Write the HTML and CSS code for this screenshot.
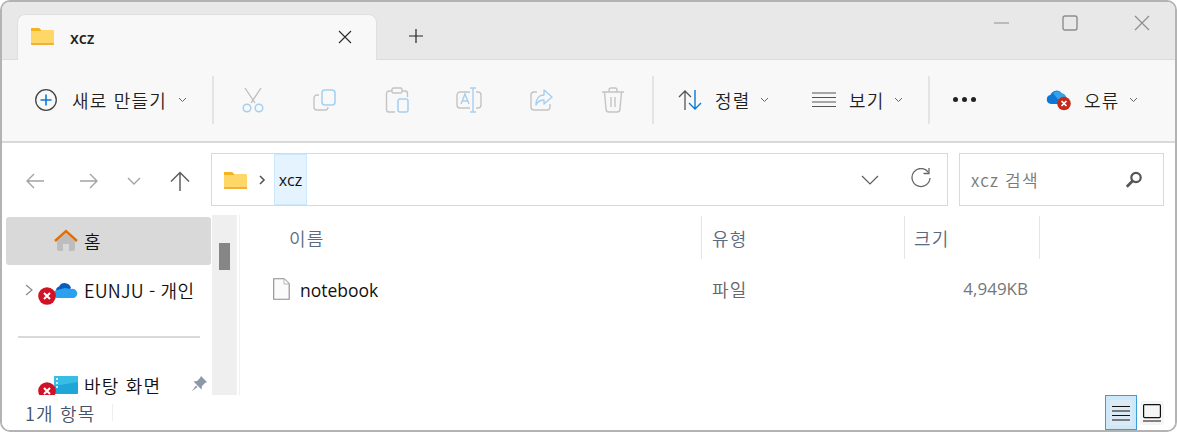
FILE: index.html
```html
<!DOCTYPE html>
<html lang="ko">
<head>
    <meta charset="UTF-8">
    <title>xcz</title>
    <link rel="stylesheet" href="styles.css">
</head>
<body>
    <div class="window">
        <!-- Title bar -->
        <div class="titlebar">
            <div class="tab">
                <svg class="tab-folder" width="23" height="18" viewBox="0 0 23 18"><path d="M0 1h8l2 2h12a1 1 0 0 1 1 1v13a1 1 0 0 1-1 1H1a1 1 0 0 1-1-1z" fill="#ffd768"/><path d="M0 1h8l2 2v1H0z" fill="#f5b31f"/><path d="M0 16h23v1a1 1 0 0 1-1 1H1a1 1 0 0 1-1-1z" fill="#f0b03a"/></svg>
                <span class="tab-title">xcz</span>
                <svg class="tab-close" width="14" height="14" viewBox="0 0 14 14"><path d="M1 1l12 12M13 1L1 13" stroke="#2b2b2b" stroke-width="1.1" fill="none"/></svg>
            </div>
            <svg class="tab-plus" width="16" height="16" viewBox="0 0 16 16"><path d="M8 1v14M1 8h14" stroke="#222" stroke-width="1.2" fill="none"/></svg>
            <div class="win-controls">
                <svg class="win-min" width="16" height="16" viewBox="0 0 16 16"><path d="M0 8h15" stroke="#8d8d8d" stroke-width="1.2"/></svg>
                <svg width="16" height="16" viewBox="0 0 16 16"><rect x="1" y="1" width="14" height="14" rx="2" stroke="#8d8d8d" stroke-width="1.4" fill="none"/></svg>
                <svg class="win-close" width="16" height="16" viewBox="0 0 16 16"><path d="M1 1l14 14M15 1L1 15" stroke="#8d8d8d" stroke-width="1.2" fill="none"/></svg>
            </div>
        </div>

        <!-- Toolbar -->
        <div class="toolbar">
            <div class="tool tool-new">
                <svg width="24" height="24" viewBox="0 0 24 24"><circle cx="12" cy="12" r="10.3" stroke="#444" stroke-width="1.3" fill="none"/><path d="M12 6.500v11M6.500 12h11" stroke="#0a78d7" stroke-width="1.6"/></svg>
                <span>새로 만들기</span>
                <svg class="caret" width="9" height="6" viewBox="0 0 9 6"><path d="M1 1l3.500 3.500L8 1" stroke="#666" fill="none"/></svg>
            </div>
            <div class="sep sep-new"></div>
            <div class="tool-icons">
                <svg width="24" height="26" viewBox="0 0 24 26"><path d="M4 1l10 15M20 1L10 16" stroke="#bdbdbd" stroke-width="1.300" fill="none"/><circle cx="6" cy="21" r="3.800" stroke="#a5cff0" stroke-width="1.500" fill="none"/><circle cx="18" cy="21" r="3.800" stroke="#a5cff0" stroke-width="1.500" fill="none"/></svg>
                <svg width="24" height="24" viewBox="0 0 24 24"><path d="M6 7H4a3 3 0 0 0-3 3v9a3 3 0 0 0 3 3h8a3 3 0 0 0 3-3" stroke="#c4c4c4" stroke-width="1.400" fill="none"/><rect x="9" y="2" width="13" height="15" rx="3" stroke="#a5cff0" stroke-width="1.500" fill="none"/></svg>
                <svg width="24" height="26" viewBox="0 0 24 26"><path d="M7 4H4a2.500 2.500 0 0 0-2.500 2.500v16A2.500 2.500 0 0 0 4 25h6M17 4h3a2.500 2.500 0 0 1 2.500 2.500V10" stroke="#c4c4c4" stroke-width="1.400" fill="none"/><rect x="7" y="1" width="10" height="5" rx="1.500" stroke="#c4c4c4" stroke-width="1.400" fill="none"/><rect x="13" y="12" width="10" height="13" rx="2" stroke="#a5cff0" stroke-width="1.500" fill="none"/></svg>
                <svg width="26" height="26" viewBox="0 0 26 26"><path d="M14 5H4a3 3 0 0 0-3 3v10a3 3 0 0 0 3 3h10M20 5h2a3 3 0 0 1 3 3v10a3 3 0 0 1-3 3h-2" stroke="#c4c4c4" stroke-width="1.400" fill="none"/><path d="M14 1h6M17 1v24M14 25h6" stroke="#a5cff0" stroke-width="1.400" fill="none"/><path d="M5 17l4-10 4 10M6.500 14h5" stroke="#a5cff0" stroke-width="1.400" fill="none"/></svg>
                <svg width="24" height="24" viewBox="0 0 24 24"><path d="M8 4H5a3 3 0 0 0-3 3v12a3 3 0 0 0 3 3h13a3 3 0 0 0 3-3v-3" stroke="#c4c4c4" stroke-width="1.400" fill="none"/><path d="M15 2l8 7-8 7v-4c-4 0-6 1-8 5 0-6 3-10 8-10z" stroke="#a5cff0" stroke-width="1.400" fill="none" stroke-linejoin="round"/></svg>
                <svg width="24" height="26" viewBox="0 0 24 26"><path d="M1 5h22M8 5V3a2 2 0 0 1 2-2h4a2 2 0 0 1 2 2v2M3.500 5l1.500 17a3 3 0 0 0 3 3h8a3 3 0 0 0 3-3l1.500-17M10 10v10M14 10v10" stroke="#c4c4c4" stroke-width="1.400" fill="none"/></svg>
            </div>
            <div class="sep sep-edit"></div>
            <div class="tool tool-sort">
                <svg width="24" height="24" viewBox="0 0 24 24"><path d="M7 22V3M1 9l6-6 6 6" stroke="#555" stroke-width="1.300" fill="none"/><path d="M17 2v19M11 15l6 6 6-6" stroke="#0a78d7" stroke-width="1.400" fill="none"/></svg>
                <span>정렬</span>
                <svg class="caret" width="9" height="6" viewBox="0 0 9 6"><path d="M1 1l3.500 3.500L8 1" stroke="#666" fill="none"/></svg>
            </div>
            <div class="tool tool-view">
                <svg width="24" height="16" viewBox="0 0 24 16"><path d="M0 1h24M0 5.500h24M0 10h24M0 14.500h24" stroke="#555" stroke-width="1.200"/></svg>
                <span>보기</span>
                <svg class="caret" width="9" height="6" viewBox="0 0 9 6"><path d="M1 1l3.500 3.500L8 1" stroke="#666" fill="none"/></svg>
            </div>
            <div class="sep sep-view"></div>
            <div class="tool-more"><i></i><i></i><i></i></div>
            <div class="tool tool-error">
                <svg width="25" height="22" viewBox="0 0 25 22"><path d="M5 15a4.500 4.500 0 0 1-.6-8.900A6.500 6.500 0 0 1 16 4.500a4.500 4.500 0 0 1 4 5V15z" fill="#0f78d4"/><path d="M7 4a6 6 0 0 1 9 .5 4.500 4.500 0 0 1 4 5l-8 1z" fill="#36a2ea"/><circle cx="18" cy="14.500" r="6.800" fill="#c42b1c"/><path d="M15.500 12l5 5M20.500 12l-5 5" stroke="#fff" stroke-width="1.700"/></svg>
                <span>오류</span>
                <svg class="caret" width="9" height="6" viewBox="0 0 9 6"><path d="M1 1l3.500 3.500L8 1" stroke="#666" fill="none"/></svg>
            </div>
        </div>

        <!-- Address row -->
        <div class="addressrow">
            <div class="nav-arrows">
                <svg width="18" height="16" viewBox="0 0 18 16"><path d="M18 8H1M8 1L1 8l7 7" stroke="#a3a3a3" stroke-width="1.400" fill="none"/></svg>
                <svg width="18" height="16" viewBox="0 0 18 16"><path d="M0 8h17M10 1l7 7-7 7" stroke="#a3a3a3" stroke-width="1.400" fill="none"/></svg>
                <svg width="14" height="8" viewBox="0 0 14 8"><path d="M1 1l6 6 6-6" stroke="#a3a3a3" stroke-width="1.400" fill="none"/></svg>
                <svg width="20" height="20" viewBox="0 0 20 20"><path d="M10 20V2M1 10.500L10 1.500l9 9" stroke="#5f5f5f" stroke-width="1.500" fill="none"/></svg>
            </div>
            <div class="addressbar">
                <svg class="addr-folder" width="23" height="18" viewBox="0 0 23 18"><path d="M0 1h8l2 2h12a1 1 0 0 1 1 1v13a1 1 0 0 1-1 1H1a1 1 0 0 1-1-1z" fill="#ffd768"/><path d="M0 1h8l2 2v1H0z" fill="#f5b31f"/><path d="M0 16h23v1a1 1 0 0 1-1 1H1a1 1 0 0 1-1-1z" fill="#f0b03a"/></svg>
                <svg class="addr-sep" width="7" height="10" viewBox="0 0 7 10"><path d="M1 1l4 4-4 4" stroke="#555" stroke-width="1.600" fill="none"/></svg>
                <span class="crumb">xcz</span>
                <svg class="addr-down" width="18" height="10" viewBox="0 0 18 10"><path d="M1 1l8 8 8-8" stroke="#5c5c5c" stroke-width="1.200" fill="none"/></svg>
                <svg class="addr-refresh" width="20" height="20" viewBox="0 0 20 20"><path d="M17.500 4.500A9 9 0 1 0 19 10" stroke="#666" stroke-width="1.300" fill="none"/><path d="M18 0v5.500h-5.500" stroke="#666" stroke-width="1.300" fill="none"/></svg>
            </div>
            <div class="searchbox">
                <span>xcz 검색</span>
                <svg width="18" height="18" viewBox="0 0 18 18"><circle cx="11" cy="6.500" r="4.700" stroke="#555" stroke-width="2.200" fill="none"/><path d="M7.500 10L1.800 15.700" stroke="#555" stroke-width="2.800"/></svg>
            </div>
        </div>

        <!-- Navigation pane and file list -->
        <div class="main">
            <div class="navpane">
                <div class="navitems">
                    <div class="navitem navitem-home">
                        <svg width="24" height="24" viewBox="0 0 24 24"><path d="M3 12l9-8 9 8v8a2 2 0 0 1-2 2h-4v-7H9v7H5a2 2 0 0 1-2-2z" fill="#bdbdbd"/><path d="M1 12L12 2l11 10" stroke="#e66c00" stroke-width="2.400" fill="none"/></svg>
                        <span>홈</span>
                    </div>
                    <div class="navitem">
                        <svg class="nav-expand" width="9" height="12" viewBox="0 0 9 12"><path d="M1 1l6 5-6 5" stroke="#8a8a8a" stroke-width="1.200" fill="none"/></svg>
                        <svg width="24" height="17" viewBox="0 0 24 17"><path d="M5 13a4.500 4.500 0 0 1 0-8.500A6.500 6.500 0 0 1 17 6l-7 8z" fill="#0a5cb8"/><path d="M4 16a4 4 0 0 1-1-8l8-2 6 1a4.500 4.500 0 0 1 3 9z" fill="#2ba0ee"/></svg>
                        <span class="label-tight">EUNJU - 개인</span>
                        <svg class="nav-badge" width="18" height="18" viewBox="0 0 18 18"><circle cx="9" cy="9" r="8.800" fill="#d01126"/><path d="M6 6l6 6M12 6l-6 6" stroke="#fff" stroke-width="2"/></svg>
                    </div>
                    <div class="navdivider"></div>
                    <div class="navitem">
                        <svg width="24" height="18" viewBox="0 0 24 18"><rect width="24" height="18" rx="1" fill="#1fa6d8"/><path d="M0 0h24v6L0 10z" fill="#43c8ea" opacity=".7"/><path d="M2 3h2M2 7h2M2 11h2" stroke="#fff" stroke-width="1.600"/></svg>
                        <span>바탕 화면</span>
                        <svg class="nav-badge" width="18" height="18" viewBox="0 0 18 18"><circle cx="9" cy="9" r="8.800" fill="#d01126"/><path d="M6 6l6 6M12 6l-6 6" stroke="#fff" stroke-width="2"/></svg>
                        <svg class="nav-pin" width="16" height="16" viewBox="0 0 16 16"><path d="M10 0l6 6-2 1-3 3-.5 3.500L5.500 8.500 2.500 5.500 6 5l3-3zM5 9.500L0.500 15.500l6-4.500z" fill="#8b98a5"/></svg>
                    </div>
                </div>
                <div class="navscroll"><div class="navthumb"></div></div>
            </div>
            <div class="filelist">
                <div class="listhead">
                    <div class="col col-name">이름</div>
                    <div class="col col-type">유형</div>
                    <div class="col col-size">크기</div>
                </div>
                <div class="listrow">
                    <div class="cell-name">
                        <svg width="17" height="22" viewBox="0 0 17 22"><path d="M.7.700h10.500l5 5v15.600H.7z" fill="#fbfbfb" stroke="#8a8a8a" stroke-width="1.100"/><path d="M11 1v5h5" fill="#fff" stroke="#b5b5b5"/></svg>
                        <span>notebook</span>
                    </div>
                    <div class="cell-type">파일</div>
                    <div class="cell-size">4,949KB</div>
                </div>
            </div>
        </div>

        <!-- Status bar -->
        <div class="statusbar">
            <span class="status-count">1개 항목</span>
            <div class="status-sep"></div>
            <div class="view-btn view-btn-on">
                <svg width="18" height="18" viewBox="0 0 18 18"><path d="M0 2.500h18M0 7h18M0 11.500h18M0 16h18" stroke="#111" stroke-width="1.200"/></svg>
            </div>
            <div class="view-btn">
                <svg width="18" height="18" viewBox="0 0 18 18"><rect x=".6" y=".6" width="16.800" height="13" rx="1" stroke="#111" stroke-width="1.200" fill="none"/><path d="M0 17h18" stroke="#111" stroke-width="1.200"/></svg>
            </div>
        </div>
    </div>
</body>
</html>
```

FILE: styles.css
```css
html, body {
    margin: 0;
    padding: 0;
    background-color: #ffffff;
}

body {
    font-family: "Noto Sans CJK KR", "Open Sans", sans-serif;
    font-size: 18px;
    font-weight: 350;
    line-height: 20px;
    letter-spacing: 1.2px;
    color: #1a1a1a;
    overflow: hidden;
}

svg {
    display: block;
    flex: none;
}

.window {
    width: 1177px;
    height: 432px;
    box-sizing: border-box;
    border: 2px solid #b3b3b3;
    border-radius: 10px;
    overflow: hidden;
    display: flex;
    flex-direction: column;
    background-color: #ffffff;
}

/* Title bar */
.titlebar {
    height: 58px;
    flex: none;
    box-sizing: border-box;
    display: flex;
    align-items: flex-end;
    background-color: #e8e8e8;
    border-bottom: 1px solid #dcdcdc;
}

.tab {
    width: 360px;
    height: 46px;
    margin-left: 15px;
    margin-bottom: -1px;
    box-sizing: border-box;
    display: flex;
    align-items: center;
    background-color: #f8f8f8;
    border: 1px solid #e0e0e0;
    border-bottom: none;
    border-radius: 8px 8px 0 0;
}

.tab-folder {
    margin-left: 13px;
    margin-bottom: 4px;
}

.tab-title {
    margin-left: 16px;
    font-family: "Open Sans", sans-serif;
    font-weight: 600;
    font-size: 16px;
    letter-spacing: 0;
    color: #222;
}

.tab-close {
    margin-left: auto;
    margin-right: 24px;
    margin-bottom: 2px;
}

.tab-plus {
    margin-left: 31px;
    margin-bottom: 15px;
}

.win-controls {
    margin-left: auto;
    margin-right: 25px;
    align-self: flex-start;
    margin-top: 13px;
    display: flex;
    gap: 55px;
}

.win-min {
    margin-left: 3px;
    margin-right: -3px;
}

.win-close {
    margin-left: 1px;
}

/* Toolbar */
.toolbar {
    height: 83px;
    flex: none;
    box-sizing: border-box;
    display: flex;
    align-items: center;
    background-color: #f8f8f8;
    border-bottom: 2px solid #d9d9d9;
    padding-bottom: 2px;
}

.tool {
    display: flex;
    align-items: center;
    color: #1f1f1f;
}

.tool .caret {
    margin-top: 1px;
}

.sep {
    width: 2px;
    height: 48px;
    background-color: #e4e4e4;
}

.tool-new {
    margin-left: 32px;
    width: 178px;
}

.tool-new span {
    margin-left: 14px;
    margin-right: 11px;
}

.sep-new {
    margin-right: 27px;
}

.tool-icons {
    display: grid;
    grid-template-columns: repeat(6, 24px);
    column-gap: 48px;
    justify-items: center;
    align-items: center;
}

.sep-edit {
    margin-left: 27px;
}

.tool-sort {
    margin-left: 24px;
    width: 134px;
}

.tool-sort span, .tool-view span, .tool-error span {
    margin-left: 13px;
    margin-right: 9px;
}

.tool-view {
    width: 116px;
}

.tool-more {
    margin-left: 23px;
    display: flex;
    gap: 4px;
}

.tool-more i {
    width: 5px;
    height: 5px;
    border-radius: 50%;
    background-color: #222;
}

.tool-error {
    margin-left: 70px;
}

/* Address row */
.addressrow {
    height: 72px;
    flex: none;
    display: flex;
    align-items: flex-start;
}

.nav-arrows {
    width: 209px;
    height: 20px;
    margin-top: 28px;
    display: grid;
    grid-template-columns: 18px 18px 14px 20px;
    column-gap: 35px;
    padding-left: 24px;
    box-sizing: border-box;
    align-items: center;
}

.nav-arrows svg:nth-child(2) {
    margin-left: 1px;
}

.nav-arrows svg:nth-child(3) {
    margin-left: -5px;
}

.nav-arrows svg:nth-child(4) {
    margin-left: -11px;
}

.addressbar {
    width: 737px;
    height: 53px;
    margin-top: 10px;
    box-sizing: border-box;
    border: 1px solid #d9d9d9;
    display: flex;
    align-items: center;
    background-color: #ffffff;
}

.addr-folder {
    margin-left: 12px;
}

.addr-sep {
    margin-left: 12px;
}

.crumb {
    margin-left: 8px;
    height: 51px;
    width: 33px;
    box-sizing: border-box;
    display: flex;
    align-items: center;
    justify-content: center;
    background-color: #e5f3ff;
    border: 1px solid #cce8ff;
    font-family: "Open Sans", sans-serif;
    font-size: 16px;
    font-weight: 400;
    letter-spacing: 0;
    color: #111;
}

.addr-down {
    margin-left: auto;
}

.addr-refresh {
    margin-left: 32px;
    margin-right: 16px;
    margin-bottom: 4px;
}

.searchbox {
    width: 205px;
    height: 53px;
    margin-top: 10px;
    margin-left: 11px;
    box-sizing: border-box;
    border: 1px solid #d9d9d9;
    display: flex;
    align-items: center;
    justify-content: space-between;
    padding: 0 20px 0 11px;
    color: #7a7a7a;
    font-size: 17px;
}

/* Navigation pane */
.main {
    flex: 1;
    min-height: 0;
    display: flex;
}

.navpane {
    width: 235px;
    flex: none;
    display: flex;
}

.navitems {
    width: 210px;
    padding-left: 4px;
    box-sizing: border-box;
    padding-top: 2px;
}

.navitem {
    position: relative;
    height: 48px;
    box-sizing: border-box;
    display: flex;
    align-items: center;
    padding-left: 48px;
    gap: 6px;
    color: #111;
}

.label-tight {
    letter-spacing: .2px;
}

.navitem-home {
    width: 205px;
    background-color: #d9d9d9;
    border-radius: 3px;
    margin-bottom: 1px;
}

.nav-expand {
    position: absolute;
    left: 19px;
    top: 18px;
}

.nav-badge {
    position: absolute;
    left: 32px;
    top: 21px;
}

.nav-pin {
    position: absolute;
    left: 185px;
    top: 15px;
}

.navdivider {
    height: 2px;
    width: 182px;
    margin: 22px 0 23px 12px;
    background-color: #d9d9d9;
}

.navscroll {
    width: 25px;
    background-color: #efefef;
}

.navthumb {
    width: 11px;
    height: 27px;
    margin: 28px 0 0 7px;
    background-color: #868686;
}

/* File list */
.filelist {
    flex: 1;
    margin-left: 2px;
    border-left: 1px solid #f0f0f0;
}

.listhead {
    height: 43px;
    margin-top: 1px;
    display: grid;
    grid-template-columns: 462px 203px 135px;
    color: #5a6a80;
}

.col {
    display: flex;
    align-items: center;
    border-right: 1px solid #e5e5e5;
    padding-left: 9px;
}

.col-name {
    padding-left: 49px;
}

.col-type {
    padding-left: 10px;
}

.listrow {
    display: grid;
    grid-template-columns: 462px 203px 123px;
    align-items: center;
    height: 48px;
    margin-top: 6px;
}

.cell-name {
    display: flex;
    align-items: center;
    gap: 10px;
    padding-left: 33px;
    color: #111;
    font-family: "Open Sans", sans-serif;
    font-size: 17.5px;
    font-weight: 400;
    letter-spacing: 0;
}

.cell-name span {
    padding-top: 2px;
}

.cell-type {
    padding-left: 10px;
    color: #666;
}

.cell-size {
    text-align: right;
    color: #777;
    font-family: "Open Sans", sans-serif;
    font-size: 17px;
    font-weight: 400;
    letter-spacing: 0;
}

/* Status bar, painted over the pane rows that run past its top edge */
.statusbar {
    position: relative;
    z-index: 1;
    height: 35px;
    flex: none;
    display: flex;
    align-items: center;
    background-color: #ffffff;
}

.status-count {
    margin-left: 23px;
    width: 87px;
    flex: none;
    color: #44546a;
}

.status-sep {
    width: 1px;
    height: 17px;
    background-color: #eeeeee;
}

.view-btn {
    width: 24px;
    height: 24px;
    display: flex;
    align-items: center;
    justify-content: center;
    background-color: #f5f5f5;
    border-radius: 3px;
    margin-left: 3px;
}

.view-btn-on {
    margin-left: 992px;
    width: 32px;
    height: 35px;
    box-sizing: border-box;
    background-color: #dceaf5;
    border: 1px solid #35a0dc;
    box-shadow: inset 0 0 0 4px #cde8f8;
    border-radius: 0;
}
```
